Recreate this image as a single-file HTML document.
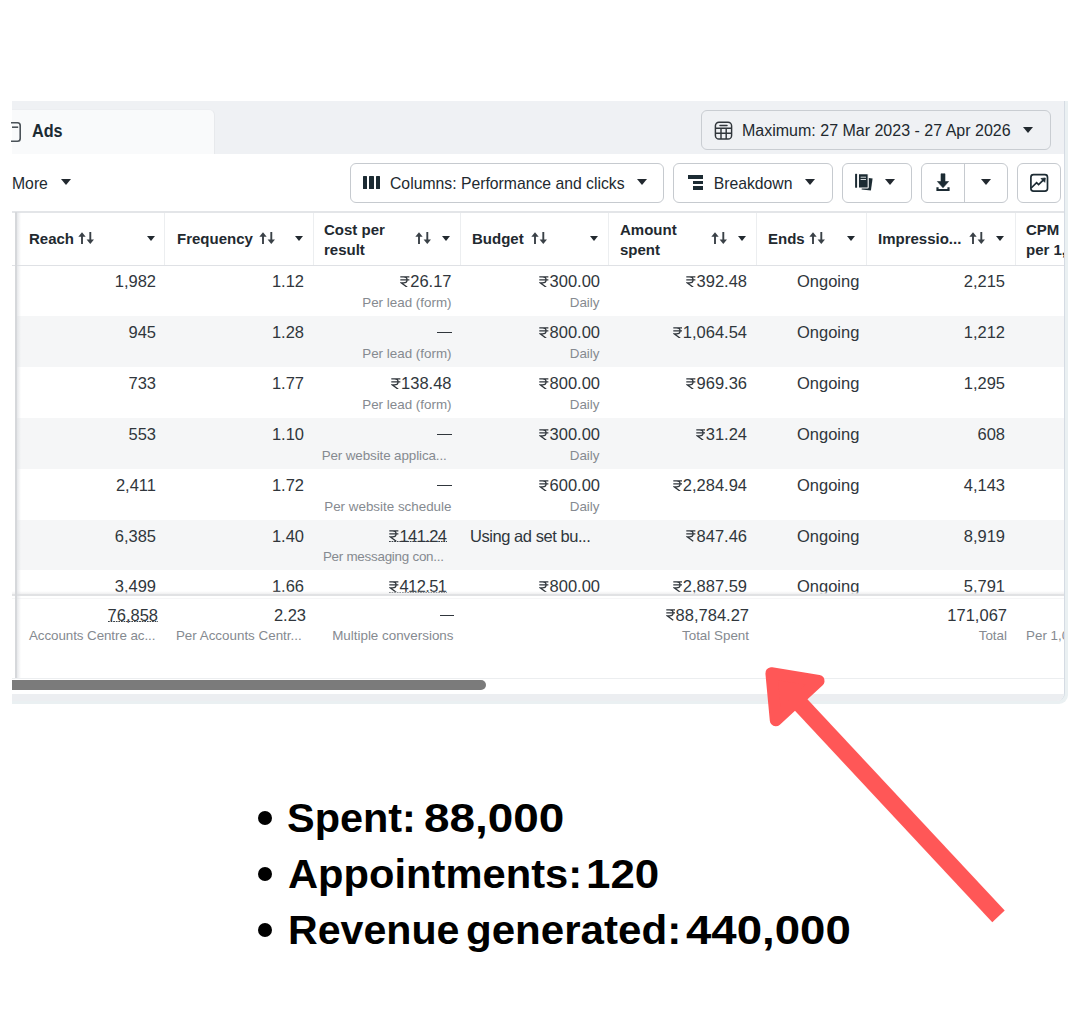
<!DOCTYPE html>
<html><head><meta charset="utf-8">
<style>
*{margin:0;padding:0;box-sizing:border-box}
html,body{width:1080px;height:1030px;background:#fff;overflow:hidden;font-family:"Liberation Sans",sans-serif;color:#1c2b33}
.a{position:absolute;white-space:nowrap;line-height:1}
.btn{position:absolute;border:1px solid #c6cacf;border-radius:6px;background:#fff}
.sep{position:absolute;top:213px;width:1px;height:52px;background:#eceef0}
.row{position:absolute;left:17px;width:1046.5px;height:51px;background:#f5f6f7}
.dot{position:absolute;left:258px;width:14px;height:14px;border-radius:50%;background:#000}
.du{background-image:linear-gradient(to right,#3a4147 50%,transparent 50%);background-size:2.6px 1.3px;background-repeat:repeat-x;background-position:0 13.8px}
</style></head><body>

<div class="a" style="left:12px;top:101px;width:1055.5px;height:603px;background:#eaf0f2;border-bottom-right-radius:9px"></div>
<div class="a" style="left:12px;top:101px;width:1053px;height:599.5px;background:#fff;border-bottom-right-radius:8px;border-right:1.5px solid #d5dbe3;overflow:hidden"><div style="position:absolute;left:0;top:593px;width:1051.5px;height:7px;background:#eceef1"></div></div>
<div class="a" style="left:12px;top:101px;width:1051.5px;height:53px;background:#eff1f4"></div>
<div class="a" style="left:12px;top:108.6px;width:203px;height:45.4px;background:#f9fafb;border-top-right-radius:6px;border-right:1px solid #e7e9ec;border-top:1px solid #eceef1"></div>
<svg class="a" style="left:11px;top:121px" width="12" height="22" viewBox="0 0 12 22" fill="none" stroke="#4b5258" stroke-width="1.6"><path d="M0 1.8H6.5Q9.2 1.8 9.2 4.5V17.5Q9.2 20.2 6.5 20.2H0"/><path d="M1 6.2H7.2"/></svg>
<div class="a" style="left:32px;top:122.4px;font-size:18px;font-weight:bold;color:#1c2b33;transform:scaleX(0.9);transform-origin:0 0">Ads</div>
<div class="btn" style="left:701px;top:110px;width:350px;height:40px;background:#eff1f4;border-color:#c9cdd2"></div>
<svg class="a" style="left:714px;top:120.5px" width="19" height="19" viewBox="0 0 19 19" fill="none" stroke="#30363b" stroke-width="1.45"><rect x="1.4" y="1.2" width="16.2" height="16.8" rx="3.6"/><path d="M6 4.5H13" stroke-linecap="round"/><path d="M1.4 7.3H17.6M1.4 12.3H17.6M7 7.3V18M12.2 7.3V18"/></svg>
<div class="a" style="left:742.0px;top:122.5px;font-size:16px;color:#22292f;">Maximum: 27 Mar 2023 - 27 Apr 2026</div>
<div class="a" style="left:1022.7px;top:127px;width:0;height:0;border-left:5.75px solid transparent;border-right:5.75px solid transparent;border-top:6.5px solid #22292f"></div>
<div class="a" style="left:12.0px;top:175.8px;font-size:15.75px;color:#22292f;">More</div>
<div class="a" style="left:60.5px;top:179px;width:0;height:0;border-left:5.75px solid transparent;border-right:5.75px solid transparent;border-top:6.5px solid #22292f"></div>
<div class="btn" style="left:350px;top:163px;width:314px;height:39.5px"></div>
<div class="a" style="left:362.7px;top:175.6px;width:4.3px;height:13.4px;background:#1c2b33;border-radius:0.5px"></div>
<div class="a" style="left:369.3px;top:175.6px;width:4.3px;height:13.4px;background:#1c2b33;border-radius:0.5px"></div>
<div class="a" style="left:375.9px;top:175.6px;width:4.3px;height:13.4px;background:#1c2b33;border-radius:0.5px"></div>
<div class="a" style="left:390.0px;top:175.6px;font-size:15.75px;color:#22292f;">Columns: Performance and clicks</div>
<div class="a" style="left:636.6px;top:179px;width:0;height:0;border-left:5.75px solid transparent;border-right:5.75px solid transparent;border-top:6.5px solid #22292f"></div>
<div class="btn" style="left:673px;top:163px;width:160px;height:39.5px"></div>
<div class="a" style="left:687.6px;top:174.9px;width:15.2px;height:3.9px;background:#1c2b33"></div>
<div class="a" style="left:693.3px;top:180.6px;width:9.5px;height:3.4px;background:#1c2b33"></div>
<div class="a" style="left:693.3px;top:186.2px;width:9.5px;height:3.5px;background:#1c2b33"></div>
<div class="a" style="left:713.7px;top:175.6px;font-size:15.75px;color:#22292f;">Breakdown</div>
<div class="a" style="left:805.2px;top:179px;width:0;height:0;border-left:5.75px solid transparent;border-right:5.75px solid transparent;border-top:6.5px solid #22292f"></div>
<div class="btn" style="left:842px;top:163px;width:70px;height:39.5px"></div>
<svg class="a" style="left:854px;top:173px" width="20" height="19" viewBox="0 0 20 19"><path d="M9 4.2L18.6 5.6L16.9 17.6L7.6 16.4Z" fill="#1c2b33"/><rect x="4.4" y="0.6" width="9.8" height="14.4" rx="0.8" fill="#1c2b33" stroke="#fff" stroke-width="1.1"/><rect x="1.1" y="0.8" width="2" height="14" rx="0.6" fill="#1c2b33"/><path d="M6.6 4.2H12M6.6 6.5H12" stroke="#eef0f2" stroke-width="0.9"/></svg>
<div class="a" style="left:884.6px;top:179px;width:0;height:0;border-left:5.75px solid transparent;border-right:5.75px solid transparent;border-top:6.5px solid #22292f"></div>
<div class="btn" style="left:921px;top:163px;width:87px;height:39.5px"></div>
<div class="a" style="left:964.3px;top:164px;width:1px;height:37.5px;background:#c6cacf"></div>
<svg class="a" style="left:935px;top:172px" width="16" height="20" viewBox="0 0 16 20" fill="#1c2b33"><path d="M6 1.8H10V9.5H13.6L8 15.8L2.4 9.5H6Z" stroke="#1c2b33" stroke-width="0.6" stroke-linejoin="round"/><path d="M2.5 15.2V18H13.5V15.2" fill="none" stroke="#1c2b33" stroke-width="2.2"/></svg>
<div class="a" style="left:980.9px;top:179px;width:0;height:0;border-left:5.75px solid transparent;border-right:5.75px solid transparent;border-top:6.5px solid #22292f"></div>
<div class="btn" style="left:1017px;top:163px;width:44px;height:39.5px"></div>
<svg class="a" style="left:1029px;top:172.5px" width="20" height="20" viewBox="0 0 20 20" fill="none" stroke="#1c2b33" stroke-width="1.7"><rect x="1.9" y="1.6" width="16.6" height="16.6" rx="2.6"/><path d="M2.2 15L7.6 9.6L9.6 11.5L15 6.3"/><path d="M12 5.5L16.3 5L15.8 9.3Z" fill="#1c2b33" stroke-width="0.8"/></svg>
<div class="a" style="left:12px;top:211px;width:1051.5px;height:2px;background:#e3e5e8"></div>
<div class="a" style="left:12px;top:264.5px;width:1051.5px;height:1.5px;background:#dfe1e5"></div>
<div class="row" style="top:316px;height:51px"></div>
<div class="row" style="top:418px;height:51px"></div>
<div class="row" style="top:519.5px;height:50.5px"></div>
<div class="sep" style="left:164px"></div>
<div class="sep" style="left:313px"></div>
<div class="sep" style="left:460px"></div>
<div class="sep" style="left:608px"></div>
<div class="sep" style="left:756px"></div>
<div class="sep" style="left:866px"></div>
<div class="sep" style="left:1015px"></div>
<div class="a" style="left:29.0px;top:230.6px;font-size:15.0px;color:#22292f;font-weight:bold">Reach</div>
<svg class="a" style="left:78px;top:232px" width="17" height="13" viewBox="0 0 17 13"><path d="M4 4V12" stroke="#3a4147" stroke-width="1.9"/><path d="M0.3 4.8L4 0.2L7.7 4.8Z" fill="#3a4147"/><path d="M12.3 0V8" stroke="#3a4147" stroke-width="1.9"/><path d="M8.6 7.4L12.3 12L16 7.4Z" fill="#3a4147"/></svg>
<div class="a" style="left:146.5px;top:235.5px;width:0;height:0;border-left:4.5px solid transparent;border-right:4.5px solid transparent;border-top:5.5px solid #22292f"></div>
<div class="a" style="left:177.0px;top:230.6px;font-size:15.0px;color:#22292f;font-weight:bold">Frequency</div>
<svg class="a" style="left:258.5px;top:232px" width="17" height="13" viewBox="0 0 17 13"><path d="M4 4V12" stroke="#3a4147" stroke-width="1.9"/><path d="M0.3 4.8L4 0.2L7.7 4.8Z" fill="#3a4147"/><path d="M12.3 0V8" stroke="#3a4147" stroke-width="1.9"/><path d="M8.6 7.4L12.3 12L16 7.4Z" fill="#3a4147"/></svg>
<div class="a" style="left:294.5px;top:235.5px;width:0;height:0;border-left:4.5px solid transparent;border-right:4.5px solid transparent;border-top:5.5px solid #22292f"></div>
<div class="a" style="left:324.0px;top:222.1px;font-size:15.0px;color:#22292f;font-weight:bold">Cost per</div>
<div class="a" style="left:324.0px;top:242.1px;font-size:15.0px;color:#22292f;font-weight:bold">result</div>
<svg class="a" style="left:415px;top:232px" width="17" height="13" viewBox="0 0 17 13"><path d="M4 4V12" stroke="#3a4147" stroke-width="1.9"/><path d="M0.3 4.8L4 0.2L7.7 4.8Z" fill="#3a4147"/><path d="M12.3 0V8" stroke="#3a4147" stroke-width="1.9"/><path d="M8.6 7.4L12.3 12L16 7.4Z" fill="#3a4147"/></svg>
<div class="a" style="left:442.0px;top:235.5px;width:0;height:0;border-left:4.5px solid transparent;border-right:4.5px solid transparent;border-top:5.5px solid #22292f"></div>
<div class="a" style="left:472.0px;top:230.6px;font-size:15.0px;color:#22292f;font-weight:bold">Budget</div>
<svg class="a" style="left:531px;top:232px" width="17" height="13" viewBox="0 0 17 13"><path d="M4 4V12" stroke="#3a4147" stroke-width="1.9"/><path d="M0.3 4.8L4 0.2L7.7 4.8Z" fill="#3a4147"/><path d="M12.3 0V8" stroke="#3a4147" stroke-width="1.9"/><path d="M8.6 7.4L12.3 12L16 7.4Z" fill="#3a4147"/></svg>
<div class="a" style="left:590.0px;top:235.5px;width:0;height:0;border-left:4.5px solid transparent;border-right:4.5px solid transparent;border-top:5.5px solid #22292f"></div>
<div class="a" style="left:620.0px;top:222.1px;font-size:15.0px;color:#22292f;font-weight:bold">Amount</div>
<div class="a" style="left:620.0px;top:242.1px;font-size:15.0px;color:#22292f;font-weight:bold">spent</div>
<svg class="a" style="left:710.5px;top:232px" width="17" height="13" viewBox="0 0 17 13"><path d="M4 4V12" stroke="#3a4147" stroke-width="1.9"/><path d="M0.3 4.8L4 0.2L7.7 4.8Z" fill="#3a4147"/><path d="M12.3 0V8" stroke="#3a4147" stroke-width="1.9"/><path d="M8.6 7.4L12.3 12L16 7.4Z" fill="#3a4147"/></svg>
<div class="a" style="left:737.5px;top:235.5px;width:0;height:0;border-left:4.5px solid transparent;border-right:4.5px solid transparent;border-top:5.5px solid #22292f"></div>
<div class="a" style="left:768.0px;top:230.6px;font-size:15.0px;color:#22292f;font-weight:bold">Ends</div>
<svg class="a" style="left:809px;top:232px" width="17" height="13" viewBox="0 0 17 13"><path d="M4 4V12" stroke="#3a4147" stroke-width="1.9"/><path d="M0.3 4.8L4 0.2L7.7 4.8Z" fill="#3a4147"/><path d="M12.3 0V8" stroke="#3a4147" stroke-width="1.9"/><path d="M8.6 7.4L12.3 12L16 7.4Z" fill="#3a4147"/></svg>
<div class="a" style="left:847.0px;top:235.5px;width:0;height:0;border-left:4.5px solid transparent;border-right:4.5px solid transparent;border-top:5.5px solid #22292f"></div>
<div class="a" style="left:878.0px;top:230.6px;font-size:15.0px;color:#22292f;font-weight:bold">Impressio...</div>
<svg class="a" style="left:969px;top:232px" width="17" height="13" viewBox="0 0 17 13"><path d="M4 4V12" stroke="#3a4147" stroke-width="1.9"/><path d="M0.3 4.8L4 0.2L7.7 4.8Z" fill="#3a4147"/><path d="M12.3 0V8" stroke="#3a4147" stroke-width="1.9"/><path d="M8.6 7.4L12.3 12L16 7.4Z" fill="#3a4147"/></svg>
<div class="a" style="left:996.0px;top:235.5px;width:0;height:0;border-left:4.5px solid transparent;border-right:4.5px solid transparent;border-top:5.5px solid #22292f"></div>
<div class="a" style="left:1026px;top:213px;width:37.5px;height:52px;overflow:hidden">
<div class="a" style="left:0.0px;top:9.1px;font-size:15.0px;color:#22292f;font-weight:bold">CPM</div>
<div class="a" style="left:0.0px;top:29.1px;font-size:15.0px;color:#22292f;font-weight:bold">per 1,</div>
</div>
<div class="a" style="right:924.0px;top:273.2px;font-size:16.5px;color:#30363c;">1,982</div>
<div class="a" style="right:776.0px;top:273.2px;font-size:16.5px;color:#30363c;">1.12</div>
<div class="a" style="right:628.5px;top:273.2px;font-size:16.5px;color:#30363c;"><svg width="9.57" height="11.55" viewBox="0 0 10 12" style="display:inline-block;vertical-align:baseline;margin-right:0.5px" fill="none" stroke="#30363c" stroke-width="1.35" stroke-linecap="butt"><path d="M0.3 0.9H9.8M0.3 4.1H9.8M0.8 0.9H3.6C6.3 0.9 7.4 2.3 7.4 4.1C7.4 6 6 7.1 3.6 7.1H1.2L7.6 11.8"/></svg>26.17</div>
<div class="a" style="right:628.5px;top:295.9px;font-size:13.4px;color:#858a90;">Per lead (form)</div>
<div class="a" style="right:480.0px;top:273.2px;font-size:16.5px;color:#30363c;"><svg width="9.57" height="11.55" viewBox="0 0 10 12" style="display:inline-block;vertical-align:baseline;margin-right:0.5px" fill="none" stroke="#30363c" stroke-width="1.35" stroke-linecap="butt"><path d="M0.3 0.9H9.8M0.3 4.1H9.8M0.8 0.9H3.6C6.3 0.9 7.4 2.3 7.4 4.1C7.4 6 6 7.1 3.6 7.1H1.2L7.6 11.8"/></svg>300.00</div>
<div class="a" style="right:480.5px;top:295.9px;font-size:13.4px;color:#858a90;">Daily</div>
<div class="a" style="right:333.0px;top:273.2px;font-size:16.5px;color:#30363c;"><svg width="9.57" height="11.55" viewBox="0 0 10 12" style="display:inline-block;vertical-align:baseline;margin-right:0.5px" fill="none" stroke="#30363c" stroke-width="1.35" stroke-linecap="butt"><path d="M0.3 0.9H9.8M0.3 4.1H9.8M0.8 0.9H3.6C6.3 0.9 7.4 2.3 7.4 4.1C7.4 6 6 7.1 3.6 7.1H1.2L7.6 11.8"/></svg>392.48</div>
<div class="a" style="left:797.0px;top:273.2px;font-size:16.5px;color:#30363c;">Ongoing</div>
<div class="a" style="right:75.0px;top:273.2px;font-size:16.5px;color:#30363c;">2,215</div>
<div class="a" style="right:924.0px;top:324.2px;font-size:16.5px;color:#30363c;">945</div>
<div class="a" style="right:776.0px;top:324.2px;font-size:16.5px;color:#30363c;">1.28</div>
<div class="a" style="left:436.7px;top:331.9px;width:15px;height:1.6px;background:#30363c"></div>
<div class="a" style="right:628.5px;top:346.9px;font-size:13.4px;color:#858a90;">Per lead (form)</div>
<div class="a" style="right:480.0px;top:324.2px;font-size:16.5px;color:#30363c;"><svg width="9.57" height="11.55" viewBox="0 0 10 12" style="display:inline-block;vertical-align:baseline;margin-right:0.5px" fill="none" stroke="#30363c" stroke-width="1.35" stroke-linecap="butt"><path d="M0.3 0.9H9.8M0.3 4.1H9.8M0.8 0.9H3.6C6.3 0.9 7.4 2.3 7.4 4.1C7.4 6 6 7.1 3.6 7.1H1.2L7.6 11.8"/></svg>800.00</div>
<div class="a" style="right:480.5px;top:346.9px;font-size:13.4px;color:#858a90;">Daily</div>
<div class="a" style="right:333.0px;top:324.2px;font-size:16.5px;color:#30363c;"><svg width="9.57" height="11.55" viewBox="0 0 10 12" style="display:inline-block;vertical-align:baseline;margin-right:0.5px" fill="none" stroke="#30363c" stroke-width="1.35" stroke-linecap="butt"><path d="M0.3 0.9H9.8M0.3 4.1H9.8M0.8 0.9H3.6C6.3 0.9 7.4 2.3 7.4 4.1C7.4 6 6 7.1 3.6 7.1H1.2L7.6 11.8"/></svg>1,064.54</div>
<div class="a" style="left:797.0px;top:324.2px;font-size:16.5px;color:#30363c;">Ongoing</div>
<div class="a" style="right:75.0px;top:324.2px;font-size:16.5px;color:#30363c;">1,212</div>
<div class="a" style="right:924.0px;top:375.2px;font-size:16.5px;color:#30363c;">733</div>
<div class="a" style="right:776.0px;top:375.2px;font-size:16.5px;color:#30363c;">1.77</div>
<div class="a" style="right:628.5px;top:375.2px;font-size:16.5px;color:#30363c;"><svg width="9.57" height="11.55" viewBox="0 0 10 12" style="display:inline-block;vertical-align:baseline;margin-right:0.5px" fill="none" stroke="#30363c" stroke-width="1.35" stroke-linecap="butt"><path d="M0.3 0.9H9.8M0.3 4.1H9.8M0.8 0.9H3.6C6.3 0.9 7.4 2.3 7.4 4.1C7.4 6 6 7.1 3.6 7.1H1.2L7.6 11.8"/></svg>138.48</div>
<div class="a" style="right:628.5px;top:397.9px;font-size:13.4px;color:#858a90;">Per lead (form)</div>
<div class="a" style="right:480.0px;top:375.2px;font-size:16.5px;color:#30363c;"><svg width="9.57" height="11.55" viewBox="0 0 10 12" style="display:inline-block;vertical-align:baseline;margin-right:0.5px" fill="none" stroke="#30363c" stroke-width="1.35" stroke-linecap="butt"><path d="M0.3 0.9H9.8M0.3 4.1H9.8M0.8 0.9H3.6C6.3 0.9 7.4 2.3 7.4 4.1C7.4 6 6 7.1 3.6 7.1H1.2L7.6 11.8"/></svg>800.00</div>
<div class="a" style="right:480.5px;top:397.9px;font-size:13.4px;color:#858a90;">Daily</div>
<div class="a" style="right:333.0px;top:375.2px;font-size:16.5px;color:#30363c;"><svg width="9.57" height="11.55" viewBox="0 0 10 12" style="display:inline-block;vertical-align:baseline;margin-right:0.5px" fill="none" stroke="#30363c" stroke-width="1.35" stroke-linecap="butt"><path d="M0.3 0.9H9.8M0.3 4.1H9.8M0.8 0.9H3.6C6.3 0.9 7.4 2.3 7.4 4.1C7.4 6 6 7.1 3.6 7.1H1.2L7.6 11.8"/></svg>969.36</div>
<div class="a" style="left:797.0px;top:375.2px;font-size:16.5px;color:#30363c;">Ongoing</div>
<div class="a" style="right:75.0px;top:375.2px;font-size:16.5px;color:#30363c;">1,295</div>
<div class="a" style="right:924.0px;top:426.2px;font-size:16.5px;color:#30363c;">553</div>
<div class="a" style="right:776.0px;top:426.2px;font-size:16.5px;color:#30363c;">1.10</div>
<div class="a" style="left:436.7px;top:433.9px;width:15px;height:1.6px;background:#30363c"></div>
<div class="a" style="right:633.3px;top:448.9px;font-size:13.4px;color:#858a90;letter-spacing:-0.1px">Per website applica...</div>
<div class="a" style="right:480.0px;top:426.2px;font-size:16.5px;color:#30363c;"><svg width="9.57" height="11.55" viewBox="0 0 10 12" style="display:inline-block;vertical-align:baseline;margin-right:0.5px" fill="none" stroke="#30363c" stroke-width="1.35" stroke-linecap="butt"><path d="M0.3 0.9H9.8M0.3 4.1H9.8M0.8 0.9H3.6C6.3 0.9 7.4 2.3 7.4 4.1C7.4 6 6 7.1 3.6 7.1H1.2L7.6 11.8"/></svg>300.00</div>
<div class="a" style="right:480.5px;top:448.9px;font-size:13.4px;color:#858a90;">Daily</div>
<div class="a" style="right:333.0px;top:426.2px;font-size:16.5px;color:#30363c;"><svg width="9.57" height="11.55" viewBox="0 0 10 12" style="display:inline-block;vertical-align:baseline;margin-right:0.5px" fill="none" stroke="#30363c" stroke-width="1.35" stroke-linecap="butt"><path d="M0.3 0.9H9.8M0.3 4.1H9.8M0.8 0.9H3.6C6.3 0.9 7.4 2.3 7.4 4.1C7.4 6 6 7.1 3.6 7.1H1.2L7.6 11.8"/></svg>31.24</div>
<div class="a" style="left:797.0px;top:426.2px;font-size:16.5px;color:#30363c;">Ongoing</div>
<div class="a" style="right:75.0px;top:426.2px;font-size:16.5px;color:#30363c;">608</div>
<div class="a" style="right:924.0px;top:477.2px;font-size:16.5px;color:#30363c;">2,411</div>
<div class="a" style="right:776.0px;top:477.2px;font-size:16.5px;color:#30363c;">1.72</div>
<div class="a" style="left:436.7px;top:484.9px;width:15px;height:1.6px;background:#30363c"></div>
<div class="a" style="right:628.5px;top:499.9px;font-size:13.4px;color:#858a90;">Per website schedule</div>
<div class="a" style="right:480.0px;top:477.2px;font-size:16.5px;color:#30363c;"><svg width="9.57" height="11.55" viewBox="0 0 10 12" style="display:inline-block;vertical-align:baseline;margin-right:0.5px" fill="none" stroke="#30363c" stroke-width="1.35" stroke-linecap="butt"><path d="M0.3 0.9H9.8M0.3 4.1H9.8M0.8 0.9H3.6C6.3 0.9 7.4 2.3 7.4 4.1C7.4 6 6 7.1 3.6 7.1H1.2L7.6 11.8"/></svg>600.00</div>
<div class="a" style="right:480.5px;top:499.9px;font-size:13.4px;color:#858a90;">Daily</div>
<div class="a" style="right:333.0px;top:477.2px;font-size:16.5px;color:#30363c;"><svg width="9.57" height="11.55" viewBox="0 0 10 12" style="display:inline-block;vertical-align:baseline;margin-right:0.5px" fill="none" stroke="#30363c" stroke-width="1.35" stroke-linecap="butt"><path d="M0.3 0.9H9.8M0.3 4.1H9.8M0.8 0.9H3.6C6.3 0.9 7.4 2.3 7.4 4.1C7.4 6 6 7.1 3.6 7.1H1.2L7.6 11.8"/></svg>2,284.94</div>
<div class="a" style="left:797.0px;top:477.2px;font-size:16.5px;color:#30363c;">Ongoing</div>
<div class="a" style="right:75.0px;top:477.2px;font-size:16.5px;color:#30363c;">4,143</div>
<div class="a" style="right:924.0px;top:527.7px;font-size:16.5px;color:#30363c;">6,385</div>
<div class="a" style="right:776.0px;top:527.7px;font-size:16.5px;color:#30363c;">1.40</div>
<div class="a du" style="right:633px;top:527.7px;font-size:16.5px;color:#30363c;letter-spacing:-0.6px;padding-right:0.6px"><svg width="9.57" height="11.55" viewBox="0 0 10 12" style="display:inline-block;vertical-align:baseline;margin-right:0.5px" fill="none" stroke="#30363c" stroke-width="1.35" stroke-linecap="butt"><path d="M0.3 0.9H9.8M0.3 4.1H9.8M0.8 0.9H3.6C6.3 0.9 7.4 2.3 7.4 4.1C7.4 6 6 7.1 3.6 7.1H1.2L7.6 11.8"/></svg>141.24</div>
<div class="a" style="right:636.3px;top:550.4px;font-size:13.4px;color:#858a90;letter-spacing:-0.25px">Per messaging con...</div>
<div class="a" style="left:470.0px;top:527.7px;font-size:16.5px;color:#30363c;letter-spacing:-0.45px">Using ad set bu...</div>
<div class="a" style="right:333.0px;top:527.7px;font-size:16.5px;color:#30363c;"><svg width="9.57" height="11.55" viewBox="0 0 10 12" style="display:inline-block;vertical-align:baseline;margin-right:0.5px" fill="none" stroke="#30363c" stroke-width="1.35" stroke-linecap="butt"><path d="M0.3 0.9H9.8M0.3 4.1H9.8M0.8 0.9H3.6C6.3 0.9 7.4 2.3 7.4 4.1C7.4 6 6 7.1 3.6 7.1H1.2L7.6 11.8"/></svg>847.46</div>
<div class="a" style="left:797.0px;top:527.7px;font-size:16.5px;color:#30363c;">Ongoing</div>
<div class="a" style="right:75.0px;top:527.7px;font-size:16.5px;color:#30363c;">8,919</div>
<div class="a" style="right:924.0px;top:578.2px;font-size:16.5px;color:#30363c;">3,499</div>
<div class="a" style="right:776.0px;top:578.2px;font-size:16.5px;color:#30363c;">1.66</div>
<div class="a du" style="right:633px;top:578.2px;font-size:16.5px;color:#30363c;letter-spacing:-0.6px;padding-right:0.6px"><svg width="9.57" height="11.55" viewBox="0 0 10 12" style="display:inline-block;vertical-align:baseline;margin-right:0.5px" fill="none" stroke="#30363c" stroke-width="1.35" stroke-linecap="butt"><path d="M0.3 0.9H9.8M0.3 4.1H9.8M0.8 0.9H3.6C6.3 0.9 7.4 2.3 7.4 4.1C7.4 6 6 7.1 3.6 7.1H1.2L7.6 11.8"/></svg>412.51</div>
<div class="a" style="right:480.0px;top:578.2px;font-size:16.5px;color:#30363c;"><svg width="9.57" height="11.55" viewBox="0 0 10 12" style="display:inline-block;vertical-align:baseline;margin-right:0.5px" fill="none" stroke="#30363c" stroke-width="1.35" stroke-linecap="butt"><path d="M0.3 0.9H9.8M0.3 4.1H9.8M0.8 0.9H3.6C6.3 0.9 7.4 2.3 7.4 4.1C7.4 6 6 7.1 3.6 7.1H1.2L7.6 11.8"/></svg>800.00</div>
<div class="a" style="right:333.0px;top:578.2px;font-size:16.5px;color:#30363c;"><svg width="9.57" height="11.55" viewBox="0 0 10 12" style="display:inline-block;vertical-align:baseline;margin-right:0.5px" fill="none" stroke="#30363c" stroke-width="1.35" stroke-linecap="butt"><path d="M0.3 0.9H9.8M0.3 4.1H9.8M0.8 0.9H3.6C6.3 0.9 7.4 2.3 7.4 4.1C7.4 6 6 7.1 3.6 7.1H1.2L7.6 11.8"/></svg>2,887.59</div>
<div class="a" style="left:797.0px;top:578.2px;font-size:16.5px;color:#30363c;">Ongoing</div>
<div class="a" style="right:75.0px;top:578.2px;font-size:16.5px;color:#30363c;">5,791</div>
<div class="a" style="left:12px;top:590.5px;width:1051.5px;height:3.5px;background:linear-gradient(rgba(240,240,240,0),#f0f0f1)"></div>
<div class="a" style="left:12px;top:594px;width:1051.5px;height:1.8px;background:#e1e2e4"></div>
<div class="a" style="left:12px;top:598px;width:1051.5px;height:1px;background:#f6f6f7"></div>
<div class="a du" style="right:922px;top:606.9px;font-size:16.5px;color:#30363c">76,858</div>
<div class="a" style="right:924.7px;top:628.9px;font-size:13.4px;color:#858a90;letter-spacing:-0.08px">Accounts Centre ac...</div>
<div class="a" style="right:774.0px;top:606.9px;font-size:16.5px;color:#30363c;">2.23</div>
<div class="a" style="right:778.3px;top:628.9px;font-size:13.4px;color:#858a90;">Per Accounts Centr...</div>
<div class="a" style="left:439.7px;top:614.5px;width:14px;height:1.6px;background:#30363c"></div>
<div class="a" style="right:626.5px;top:628.9px;font-size:13.4px;color:#858a90;">Multiple conversions</div>
<div class="a" style="right:331.0px;top:606.9px;font-size:16.5px;color:#30363c;"><svg width="9.57" height="11.55" viewBox="0 0 10 12" style="display:inline-block;vertical-align:baseline;margin-right:0.5px" fill="none" stroke="#30363c" stroke-width="1.35" stroke-linecap="butt"><path d="M0.3 0.9H9.8M0.3 4.1H9.8M0.8 0.9H3.6C6.3 0.9 7.4 2.3 7.4 4.1C7.4 6 6 7.1 3.6 7.1H1.2L7.6 11.8"/></svg>88,784.27</div>
<div class="a" style="right:331.0px;top:628.9px;font-size:13.4px;color:#858a90;">Total Spent</div>
<div class="a" style="right:73.0px;top:606.9px;font-size:16.5px;color:#30363c;">171,067</div>
<div class="a" style="right:73.0px;top:628.9px;font-size:13.4px;color:#858a90;">Total</div>
<div class="a" style="left:1026px;top:600px;width:37.5px;height:60px;overflow:hidden">
<div class="a" style="left:0.0px;top:28.9px;font-size:13.4px;color:#858a90;">Per 1,0</div>
</div>
<div class="a" style="left:15px;top:212px;width:1.5px;height:466px;background:#d6d8db"></div>
<div class="a" style="left:16.5px;top:212px;width:4px;height:466px;background:linear-gradient(to right,rgba(220,222,226,0.7),rgba(255,255,255,0))"></div>
<div class="a" style="left:12px;top:678px;width:1051.5px;height:1px;background:#eceef0"></div>
<div class="a" style="left:12px;top:680px;width:474px;height:10px;background:#7b7b7b;border-radius:0 5px 5px 0"></div>
<div class="dot" style="top:811px"></div>
<div class="dot" style="top:867px"></div>
<div class="dot" style="top:923px"></div>
<div class="a" style="left:287.28px;top:797.5px;font-size:41px;font-weight:bold;color:#000;transform:scaleX(1.0107);transform-origin:0 0">Spent:</div>
<div class="a" style="left:424.48px;top:797.5px;font-size:41px;font-weight:bold;color:#000;transform:scaleX(1.1195);transform-origin:0 0">88,000</div>
<div class="a" style="left:288.28px;top:853.5px;font-size:41px;font-weight:bold;color:#000;transform:scaleX(1.0169);transform-origin:0 0">Appointments:</div>
<div class="a" style="left:586.09px;top:853.5px;font-size:41px;font-weight:bold;color:#000;transform:scaleX(1.0703);transform-origin:0 0">120</div>
<div class="a" style="left:287.69px;top:909.5px;font-size:41px;font-weight:bold;color:#000;transform:scaleX(1.0030);transform-origin:0 0">Revenue</div>
<div class="a" style="left:465.95px;top:909.5px;font-size:41px;font-weight:bold;color:#000;transform:scaleX(1.0265);transform-origin:0 0">generated:</div>
<div class="a" style="left:685.89px;top:909.5px;font-size:41px;font-weight:bold;color:#000;transform:scaleX(1.1116);transform-origin:0 0">440,000</div>
<svg class="a" style="left:0;top:0" width="1080" height="1030" viewBox="0 0 1080 1030">
<line x1="998.5" y1="916.4" x2="790" y2="693" stroke="#ff5757" stroke-width="17"/>
<polygon points="771.4,673.2 818.6,680.8 775.8,720.3" fill="#ff5757" stroke="#ff5757" stroke-width="12" stroke-linejoin="round"/>
</svg>
</body></html>
